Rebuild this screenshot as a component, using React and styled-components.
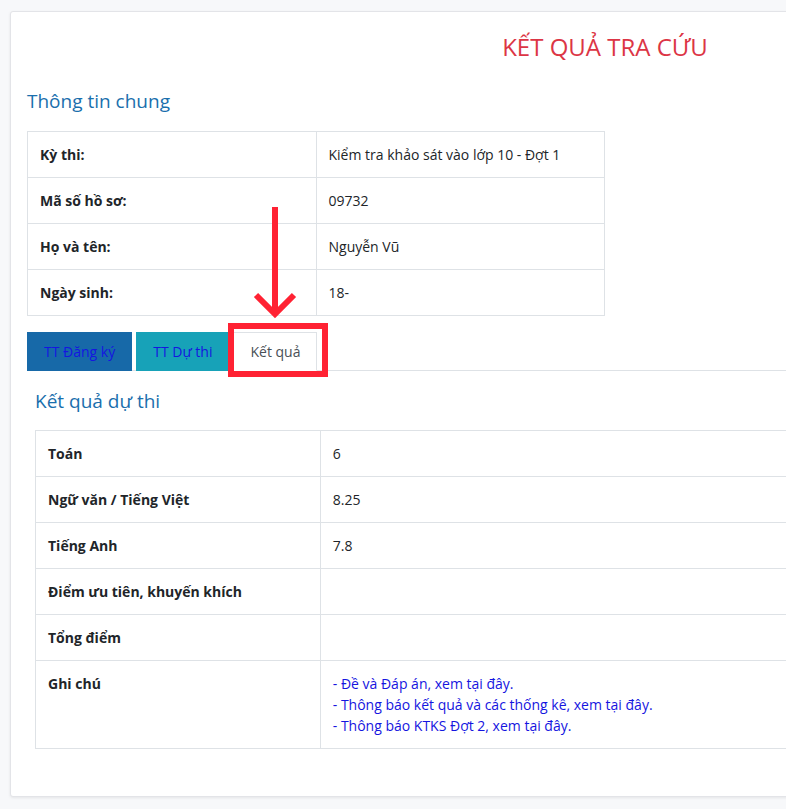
import React from 'react';
import styled, { createGlobalStyle } from 'styled-components';

const GlobalStyle = createGlobalStyle`
  html, body {
    margin: 0;
    padding: 0;
    overflow: hidden;
    background: #f7f8fa;
    font-family: "Open Sans", "Liberation Sans", sans-serif;
    font-size: 14px;
    line-height: 1.5;
    color: #212529;
  }
`;

const Card = styled.div`
  position: relative;
  box-sizing: border-box;
  width: 1190px;
  margin: 11px 0 12px 10px;
  padding: 18px 16px 31px;
  background: #fff;
  border: 1px solid #e3e4e8;
  border-radius: 3px;
  box-shadow: 0 1px 3px rgba(0, 0, 0, 0.08);
`;

const Title = styled.h2`
  margin: 0 0 26px;
  text-align: center;
  font-size: 24px;
  font-weight: 400;
  line-height: 1.4;
  color: #dc3545;
`;

const SectionTitle = styled.h4`
  margin: 0 0 ${p => p.gap || 16}px;
  font-size: 19px;
  font-weight: 400;
  line-height: 1.2;
  color: ${p => p.color || '#1a6fad'};
`;

const Table = styled.table`
  width: ${p => p.width || '100%'};
  border-collapse: collapse;
  margin-bottom: 16px;
`;

const Row = styled.tr``;

const Label = styled.td`
  width: ${p => p.width || '50%'};
  padding: 12px;
  border: 1px solid #dee2e6;
  font-weight: 700;
  vertical-align: top;
`;

const Value = styled.td`
  padding: 12px;
  border: 1px solid #dee2e6;
  vertical-align: top;
`;

const Nav = styled.div`
  display: flex;
  align-items: flex-end;
  border-bottom: 1px solid #dee2e6;
`;

const Tab = styled.a`
  display: block;
  box-sizing: border-box;
  height: 39px;
  padding: 8px 16px;
  margin-right: 4px;
  background: ${p => p.bg || '#fff'};
  color: ${p => (p.active ? '#495057' : '#1515e0')};
  border: 1px solid ${p => (p.active ? '#dee2e6' : p.bg)};
  border-bottom-color: ${p => (p.active ? '#fff' : p.bg)};
  margin-bottom: -1px;
  text-decoration: none;
`;

const TabPane = styled.div`
  padding: 19px 8px 0;
`;

const Links = styled.div`
  display: flex;
  flex-direction: column;
`;

const NoteLink = styled.a`
  color: #1515e0;
  text-decoration: none;
`;

const Highlight = styled.div`
  position: absolute;
  left: 217px;
  top: 311px;
  width: 100px;
  height: 54px;
  box-sizing: border-box;
  border: 6px solid #ff2233;
  pointer-events: none;
`;

const Arrow = styled.svg`
  position: absolute;
  left: 232px;
  top: 183px;
  pointer-events: none;
`;

const general = [
  ['Kỳ thi:', 'Kiểm tra khảo sát vào lớp 10 - Đợt 1'],
  ['Mã số hồ sơ:', '09732'],
  ['Họ và tên:', 'Nguyễn Vũ'],
  ['Ngày sinh:', '18-']
];

const results = [
  ['Toán', '6'],
  ['Ngữ văn / Tiếng Việt', '8.25'],
  ['Tiếng Anh', '7.8'],
  ['Điểm ưu tiên, khuyến khích', ''],
  ['Tổng điểm', '']
];

const notes = [
  '- Đề và Đáp án, xem tại đây.',
  '- Thông báo kết quả và các thống kê, xem tại đây.',
  '- Thông báo KTKS Đợt 2, xem tại đây.'
];

const App = () => {
  return (
    <>
      <GlobalStyle />
      <Card>
        <Title>KẾT QUẢ TRA CỨU</Title>
        <SectionTitle gap={19}>Thông tin chung</SectionTitle>
        <Table width="50%">
          <tbody>
            {general.map(([k, v]) => (
              <Row key={k}>
                <Label>{k}</Label>
                <Value>{v}</Value>
              </Row>
            ))}
          </tbody>
        </Table>
        <Nav>
          <Tab bg="#1769a8">TT Đăng ký</Tab>
          <Tab bg="#17a2b8">TT Dự thi</Tab>
          <Tab active>Kết quả</Tab>
        </Nav>
        <TabPane>
          <SectionTitle gap={17}>Kết quả dự thi</SectionTitle>
          <Table>
            <tbody>
              {results.map(([k, v]) => (
                <Row key={k}>
                  <Label width="25%">{k}</Label>
                  <Value>{v}</Value>
                </Row>
              ))}
              <Row>
                <Label width="25%">Ghi chú</Label>
                <Value>
                  <Links>
                    {notes.map(n => (
                      <NoteLink key={n} href="#">{n}</NoteLink>
                    ))}
                  </Links>
                </Value>
              </Row>
            </tbody>
          </Table>
        </TabPane>
        <Highlight />
        <Arrow width="56" height="128" viewBox="0 0 56 128">
          <line x1="32" y1="12" x2="32" y2="118" stroke="#ff2233" strokeWidth="6" />
          <polyline points="13,100 32,119 51,100" fill="none" stroke="#ff2233" strokeWidth="6" />
        </Arrow>
      </Card>
    </>
  );
};

export default App;
